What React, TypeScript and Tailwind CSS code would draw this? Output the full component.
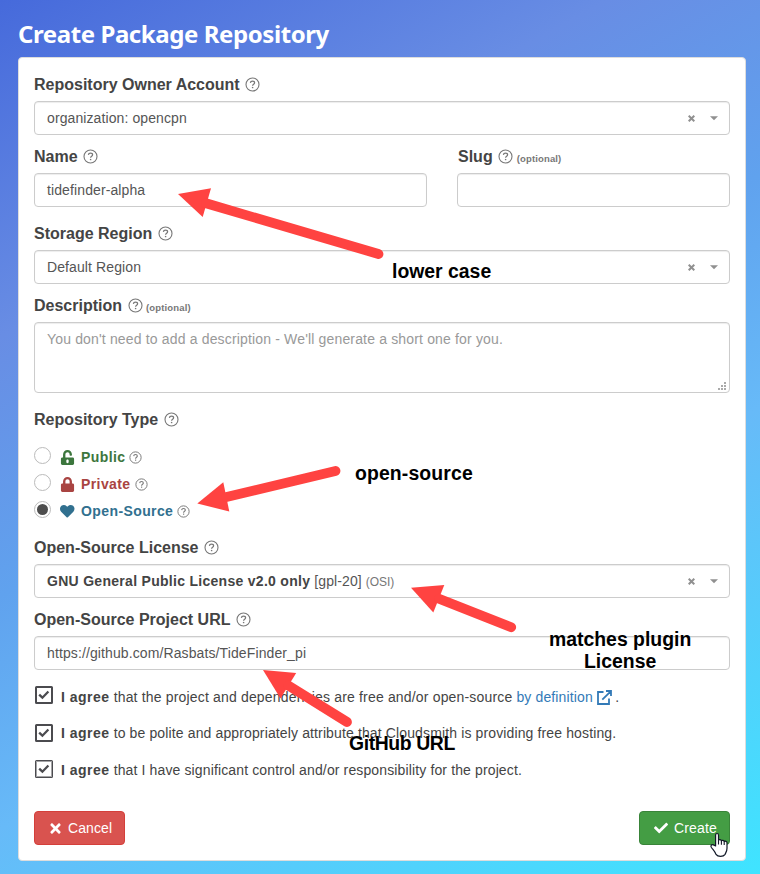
import React from "react";
import { FaCheck, FaHeart, FaLock, FaTimes, FaUnlockAlt } from "react-icons/fa";

function Help({ size = 15, className = "" }: { size?: number; className?: string }) {
  return (
    <svg width={size} height={size} viewBox="0 0 15 15" fill="none" stroke="#777" className={`shrink-0 ${className}`}>
      <circle cx="7.5" cy="7.5" r="6.5" strokeWidth="1.1" />
      <path d="M5.4 5.9C5.5 4.6 6.3 4 7.5 4c1.2 0 2.1.7 2.1 1.7 0 1.5-2 1.5-2 3.1" strokeWidth="1.25" />
      <path d="M7.6 9.9v1.3" strokeWidth="1.4" />
    </svg>
  );
}

function Label({ children, optional }: { children: React.ReactNode; optional?: boolean }) {
  return (
    <div className="flex h-7 items-center pb-1 text-[16px] leading-6 font-bold whitespace-nowrap text-[#444]">
      <span>{children}</span>
      <Help className="mb-px ml-[5.5px]" />
      {optional && <span className="mt-[4px] ml-[3.5px] text-[9.5px] tracking-[0.15px] text-[#777]">(optional)</span>}
    </div>
  );
}

const box = "h-[34px] rounded-[4px] border border-[#ccc] bg-white shadow-[inset_0_1px_1px_rgba(0,0,0,0.075)]";

function Field({ children }: { children?: React.ReactNode }) {
  return <div className={`${box} flex items-center px-3 text-[14px] tracking-[0.11px] whitespace-nowrap text-[#555]`}>{children}</div>;
}

function Select({ children }: { children: React.ReactNode }) {
  return (
    <div className={`${box} flex items-center pr-[11px] pl-3 text-[14px] tracking-[0.1px] whitespace-nowrap text-[#555]`}>
      <div className="flex-1">{children}</div>
      <svg width="7" height="7" viewBox="0 0 7 7" stroke="#909090" strokeWidth="2" className="mr-[15.5px]">
        <path d="M.7.7l5.6 5.6M6.3.7L.7 6.3" />
      </svg>
      <svg width="8" height="5" viewBox="0 0 8 5" fill="#909090">
        <path d="M0 .3h8l-4 4z" />
      </svg>
    </div>
  );
}

function Radio({ checked, icon, label, color }: { checked?: boolean; icon: React.ReactNode; label: string; color: string }) {
  return (
    <div className="flex h-[27px] items-center">
      <span className="mb-[2px] flex size-[17px] items-center justify-center rounded-full border border-[#bbb]">
        {checked && <span className="size-[11px] rounded-full bg-[#4d4d4d]" />}
      </span>
      <span className={`mt-px ml-[9px] flex w-[15px] justify-center ${color}`}>{icon}</span>
      <span className={`mt-px ml-[6px] text-[14px] font-bold tracking-[0.4px] ${color}`}>{label}</span>
      <Help size={13} className="mt-px ml-[4px]" />
    </div>
  );
}

function Agree({ children, focused, low }: { children: React.ReactNode; focused?: boolean; low?: boolean }) {
  return (
    <div className="flex h-9 items-center text-[14px] whitespace-nowrap text-[#444]">
      <svg width="19" height="18" viewBox="0 0 19 18" fill="none" stroke="#4b4b4f" className={low ? "mb-px" : "mb-[5px]"}>
        <rect x="2" y="1" width="16" height="16" rx="0.5" strokeWidth="2" />
        {focused && <rect x="2.5" y="1.5" width="15" height="15" stroke="#fff" strokeWidth="1" strokeDasharray="1 1" />}
        <path d="M5.2 8.6l3.2 3.1 6-6.2" strokeWidth="2.3" />
      </svg>
      <span className={`ml-2 flex ${focused ? "mt-[2px]" : ""}`}>
        <b className="tracking-[0.5px]">I agree</b>
        <span className="ml-1 tracking-[0.13px]">{children}</span>
      </span>
    </div>
  );
}

function Arrow({ head, shaft }: { head: string; shaft: string }) {
  return (
    <g>
      <path d={head} fill="#ff4341" />
      <path d={shaft} stroke="#ff4341" strokeWidth="9.8" strokeLinecap="round" />
    </g>
  );
}

function Note({ className, children }: { className: string; children: React.ReactNode }) {
  return <div className={`absolute text-center text-[19.4px] leading-[22px] font-bold whitespace-nowrap text-black ${className}`}>{children}</div>;
}

export default function App() {
  return (
    <div className="relative h-[874px] w-[760px] overflow-hidden bg-[linear-gradient(151deg,#466adb_0%,#688de4_26%,#60a2ee_46%,#67baf8_64%,#3fe4ff_100%)] pt-[18px] pl-[18px] font-['Liberation_Sans',Arial,sans-serif]">
      <h1 className="h-[39px] font-['Noto_Sans',sans-serif] text-[24px] leading-[32px] font-bold tracking-[-0.42px] whitespace-nowrap text-white">
        Create Package Repository
      </h1>
      <main className="h-[804px] w-[728px] rounded-[4px] border border-[#ddd] bg-white px-[15px] pt-[15px]">
        <Label>Repository Owner Account</Label>
        <Select>organization: opencpn</Select>
        <div className="mt-[10px] grid grid-cols-[393px_273px] gap-[30px]">
          <div>
            <Label>Name</Label>
            <Field>tidefinder-alpha</Field>
          </div>
          <div>
            <Label optional>
              <span className="ml-px">Slug</span>
            </Label>
            <Field />
          </div>
        </div>
        <div className="mt-[15px]">
          <Label>Storage Region</Label>
          <Select>Default Region</Select>
        </div>
        <div className="mt-[10px]">
          <Label optional>Description</Label>
          <div className="flex h-[71px] justify-between rounded-[4px] border border-[#ccc] pt-[6px] pr-[3px] pb-[2px] pl-3 text-[14px] leading-5 tracking-[0.16px] text-[#999] shadow-[inset_0_1px_1px_rgba(0,0,0,0.075)]">
            <span>You don't need to add a description - We'll generate a short one for you.</span>
            <svg width="8" height="8" viewBox="0 0 8 8" fill="#aaa" className="self-end">
              <path d="M6 0h2v2H6zM3 3h2v2H3zM6 3h2v2H6zM0 6h2v2H0zM3 6h2v2H3zM6 6h2v2H6z" />
            </svg>
          </div>
        </div>
        <div className="mt-[15px]">
          <Label>Repository Type</Label>
          <div className="pt-[7px]">
            <Radio icon={<FaUnlockAlt size={15} />} label="Public" color="text-[#3c763d]" />
            <Radio icon={<FaLock size={15} />} label="Private" color="text-[#a94442]" />
            <Radio checked icon={<FaHeart size={14.5} />} label="Open-Source" color="text-[#31708f]" />
          </div>
        </div>
        <div className="mt-[12px]">
          <Label>Open-Source License</Label>
          <Select>
            <b className="tracking-[0.29px] text-[#444]">GNU General Public License v2.0 only</b> [gpl-20]{" "}
            <span className="text-[12px] tracking-[-0.05px] text-[#777]">(OSI)</span>
          </Select>
        </div>
        <div className="mt-[10px]">
          <Label>Open-Source Project URL</Label>
          <Field>https://github.com/Rasbats/TideFinder_pi</Field>
        </div>
        <div className="mt-[9px]">
          <Agree>
            <span className="tracking-[0.17px]">that the project and dependencies are free and/or open-source</span>{" "}
            <a className="text-[#337ab7]">
              by definition
              <svg width="15" height="15" viewBox="0 0 15 15" fill="none" stroke="currentColor" strokeWidth="1.8" className="mr-[3px] ml-[4.5px] inline align-[-3px]">
                <path d="M6.5 2H1v12h11V8.5M9 1h5v5M13.7 1.3L5.3 9.7" />
              </svg>
            </a>
            .
          </Agree>
          <Agree low>to be polite and appropriately attribute that Cloudsmith is providing free hosting.</Agree>
          <Agree low focused>
            that I have significant control and/or responsibility for the project.
          </Agree>
        </div>
        <div className="mt-[24px] flex justify-between text-[14px] text-white">
          <button className="flex h-[34px] w-[91px] items-center rounded-[4px] border border-[#d43f3a] bg-[#d9534f] pl-[13px]">
            <FaTimes size={15} />
            <span className="ml-[5px] tracking-[0.1px]">Cancel</span>
          </button>
          <button className="flex h-[34px] w-[91px] items-center rounded-[4px] border border-[#398439] bg-[#449d44] pl-[14px]">
            <FaCheck size={14} />
            <span className="ml-[6px] tracking-[0.15px]">Create</span>
          </button>
        </div>
      </main>

      <svg width="760" height="874" fill="none" className="absolute top-0 left-0">
        <Arrow head="M178 194L211 188.3 202.7 217z" shaft="M206 203.3L378.5 254" />
        <Arrow head="M197.3 503.5L223.3 482.3 229.3 511.5z" shaft="M226.5 497L335.5 471" />
        <Arrow head="M411 587.7L444.3 585 433.3 612.5z" shaft="M439 598.7L511.2 627.3" />
        <Arrow head="M263 670L296.2 673 280.5 698.5z" shaft="M288.5 685.6L347 722" />
        <g transform="translate(709.5 831.5)">
          <path
            d="M6.1 14.5V3.7c0-2.3 2.9-2.3 2.9 0v5.1c.6-1 2.6-.8 2.9.5.7-.8 2.6-.5 2.8.7.9-.7 2.8-.2 2.8 1.2v5.6c0 3-1.2 4-1.9 6-1.9 2.8-7.2 2.7-9.1.1-.9-2.7-3.3-5-4.7-7.2-1.3-2.2 1.4-3.4 2.8-1.9z"
            fill="#fff"
            stroke="#111827"
            strokeWidth="1.2"
            strokeLinejoin="round"
          />
          <path d="M9 8.8v4.2M11.9 9.3v3.9M14.7 10v3.5" stroke="#111827" strokeWidth="1.1" />
        </g>
      </svg>
      <Note className="top-[260px] left-[392px]">lower case</Note>
      <Note className="top-[462px] left-[355px] tracking-[0.13px]">open-source</Note>
      <Note className="top-[628px] left-[549px]">
        matches plugin
        <br />
        License
      </Note>
      <Note className="top-[732px] left-[349px] tracking-[-0.4px]">GitHub URL</Note>
    </div>
  );
}
